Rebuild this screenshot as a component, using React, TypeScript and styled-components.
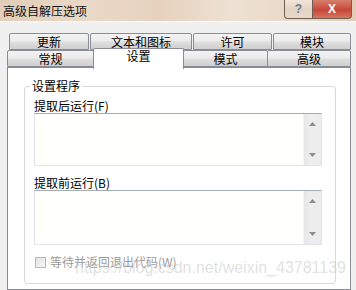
import React, { FC } from 'react';
import styled, { createGlobalStyle, css } from 'styled-components';

const GlobalStyle = createGlobalStyle`
    html, body {
        margin: 0;
        padding: 0;
        background: #f0f0f0;
    }
    body {
        font-family: "Noto Sans CJK SC", "Liberation Sans", sans-serif;
        font-size: 12px;
        color: #000;
    }
`;

const Window = styled.div`
    position: relative;
    width: 356px;
    height: 290px;
    overflow: hidden;
    background: #f0f0f0;
    display: flex;
    flex-direction: column;
`;

const TitleBar = styled.div`
    height: 21px;
    flex: none;
    display: flex;
    align-items: flex-start;
    background: linear-gradient(90deg, #e2cdb8 0%, #ead9c8 25%, #e6d2bf 45%, #eee1d3 65%, #e9d7c6 85%, #e3ccb7 100%);
    border-bottom: 1px solid #fbf8f4;
`;

const Title = styled.span`
    padding: 4px 0 0 3px;
    font-size: 12px;
    line-height: 14px;
    color: #111;
`;

const CaptionButtons = styled.div`
    margin-left: auto;
    margin-right: 4px;
    display: flex;
`;

const CaptionButton = styled.div<{ close?: boolean }>`
    height: 18px;
    width: ${({ close }) => (close ? 38 : 27)}px;
    border: 1px solid #6d5d52;
    border-top: none;
    display: flex;
    align-items: center;
    justify-content: center;
    font-family: "Liberation Sans", sans-serif;
    font-weight: bold;
    font-size: 12px;
    ${({ close }) =>
        close
            ? css`
                  border-radius: 0 0 4px 0;
                  border-left: none;
                  background: linear-gradient(#d67f6c, #c8463a 55%, #d7765d);
                  color: #fff;
              `
            : css`
                  border-radius: 0 0 0 4px;
                  background: linear-gradient(#f1e5d9, #e2d2c2 55%, #ead9c8);
                  color: #6b7a8c;
              `}
`;

const Body = styled.div`
    flex: 1;
    padding: 11px 5px 0 7px;
    display: flex;
    flex-direction: column;
`;

const TabRow = styled.div<{ back?: boolean }>`
    display: flex;
    align-items: flex-end;
    gap: ${({ back }) => (back ? 2 : 0)}px;
    padding-left: ${({ back }) => (back ? 2 : 0)}px;
    margin-top: ${({ back }) => (back ? 0 : -1)}px;
    height: ${({ back }) => (back ? 17 : 18)}px;
    position: relative;
    z-index: ${({ back }) => (back ? 0 : 1)};
`;

const Tab = styled.div<{ width: number; selected?: boolean }>`
    width: ${({ width }) => width}px;
    height: 17px;
    box-sizing: border-box;
    flex: none;
    border: 1px solid #898c95;
    border-radius: 2px 2px 0 0;
    background: linear-gradient(#f4f4f4, #ebebeb 45%, #dedede 55%, #cfcfcf);
    text-align: center;
    font-size: 12px;
    line-height: 15px;
    margin-right: -1px;
    ${({ selected }) =>
        selected &&
        css`
            height: 21px;
            margin-bottom: -2px;
            border-bottom: none;
            background: #fff;
            line-height: 14px;
            position: relative;
            z-index: 2;
        `}
`;

const Panel = styled.div`
    flex: 1;
    width: 344px;
    box-sizing: border-box;
    border: 1px solid #898c95;
    background: #fff;
    padding: 11px 14px 0 16px;
    display: flex;
    flex-direction: column;
`;

const Group = styled.fieldset`
    margin: 0;
    padding: 0 13px 14px 9px;
    border: 1px solid #d5d9dd;
    border-radius: 3px;
    display: flex;
    flex-direction: column;
`;

const Legend = styled.legend`
    padding: 0 2px;
    margin-left: -4px;
    font-size: 12px;
    line-height: 14px;
`;

const FieldLabel = styled.div<{ first?: boolean }>`
    font-size: 12px;
    line-height: 14px;
    margin-top: ${({ first }) => (first ? 6 : 10)}px;
`;

const EditBox = styled.div<{ height: number }>`
    height: ${({ height }) => height}px;
    box-sizing: border-box;
    border: 1px solid #e2e3ea;
    border-top-color: #a3adb5;
    display: flex;
    background: #fffffc;
`;

const EditArea = styled.div`
    flex: 1;
`;

const ScrollBar = styled.div`
    width: 17px;
    flex: none;
    display: flex;
    flex-direction: column;
    justify-content: space-between;
    align-items: center;
    padding: 8px 0;
    background: linear-gradient(90deg, #e6e6e6, #eeeeee 40%, #ececec);
    border-left: 1px solid #f3f3f3;
`;

const CheckRow = styled.div`
    display: flex;
    align-items: center;
    gap: 4px;
    margin-top: 10px;
    height: 14px;
    padding-left: 1px;
`;

const CheckBox = styled.span`
    width: 9px;
    height: 9px;
    border: 1px solid #b8b8b8;
    background: linear-gradient(135deg, #e4e4e4, #f7f7f7);
`;

const CheckLabel = styled.span`
    color: #9a9a9a;
    font-size: 12px;
    line-height: 14px;
`;

const Watermark = styled.div`
    position: absolute;
    left: 75px;
    top: 258px;
    font-family: "Liberation Sans", Arial, sans-serif;
    font-size: 16px;
    line-height: 20px;
    color: rgba(200, 200, 200, 0.55);
    pointer-events: none;
    white-space: nowrap;
`;

const Arrow: FC<{ down?: boolean }> = ({ down }) => (
    <svg width="7" height="4" viewBox="0 0 7 4">
        <path d={down ? 'M0 0 L7 0 L3.5 4 Z' : 'M0 4 L7 4 L3.5 0 Z'} fill="#8d8d8d" />
    </svg>
);

const Edit: FC<{ height: number }> = ({ height }) => (
    <EditBox height={height}>
        <EditArea />
        <ScrollBar>
            <Arrow />
            <Arrow down />
        </ScrollBar>
    </EditBox>
);

const backTabs = [
    { label: '更新', width: 80 },
    { label: '文本和图标', width: 102 },
    { label: '许可', width: 79 },
    { label: '模块', width: 78 },
];

const frontTabs = [
    { label: '常规', width: 87 },
    { label: '设置', width: 91, selected: true },
    { label: '模式', width: 85 },
    { label: '高级', width: 84 },
];

const App: FC = () => {
    return (
        <Window>
            <GlobalStyle />
            <TitleBar>
                <Title>高级自解压选项</Title>
                <CaptionButtons>
                    <CaptionButton>?</CaptionButton>
                    <CaptionButton close>X</CaptionButton>
                </CaptionButtons>
            </TitleBar>
            <Body>
                <TabRow back>
                    {backTabs.map(({ label, width }) => (
                        <Tab key={label} width={width}>
                            {label}
                        </Tab>
                    ))}
                </TabRow>
                <TabRow>
                    {frontTabs.map(({ label, width, selected }) => (
                        <Tab key={label} width={width} selected={selected}>
                            {label}
                        </Tab>
                    ))}
                </TabRow>
                <Panel>
                    <Group>
                        <Legend>设置程序</Legend>
                        <FieldLabel first>提取后运行(F)</FieldLabel>
                        <Edit height={53} />
                        <FieldLabel>提取前运行(B)</FieldLabel>
                        <Edit height={55} />
                        <CheckRow>
                            <CheckBox />
                            <CheckLabel>等待并返回退出代码(W)</CheckLabel>
                        </CheckRow>
                    </Group>
                </Panel>
            </Body>
            <Watermark>https://blog.csdn.net/weixin_43781139</Watermark>
        </Window>
    );
};

export default App;
